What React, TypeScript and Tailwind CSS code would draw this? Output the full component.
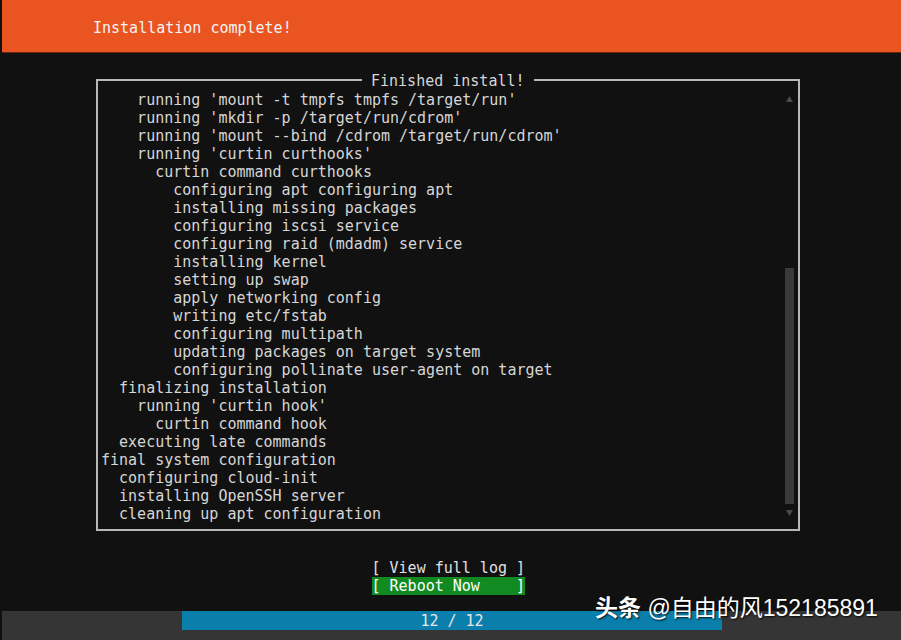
import React from "react";

const logLines = [
  "    running 'mount -t tmpfs tmpfs /target/run'",
  "    running 'mkdir -p /target/run/cdrom'",
  "    running 'mount --bind /cdrom /target/run/cdrom'",
  "    running 'curtin curthooks'",
  "      curtin command curthooks",
  "        configuring apt configuring apt",
  "        installing missing packages",
  "        configuring iscsi service",
  "        configuring raid (mdadm) service",
  "        installing kernel",
  "        setting up swap",
  "        apply networking config",
  "        writing etc/fstab",
  "        configuring multipath",
  "        updating packages on target system",
  "        configuring pollinate user-agent on target",
  "  finalizing installation",
  "    running 'curtin hook'",
  "      curtin command hook",
  "  executing late commands",
  "final system configuration",
  "  configuring cloud-init",
  "  installing OpenSSH server",
  "  cleaning up apt configuration",
];

const Arrow = ({ down }: { down?: boolean }) => (
  <svg width="9" height="8" viewBox="0 0 9 8">
    <path d={down ? "M1 1 L8 1 L4.5 7 Z" : "M1 7 L8 7 L4.5 1 Z"} fill="#4a4a4a" />
  </svg>
);

export default function App() {
  return (
    <div className="relative w-[901px] h-[640px] overflow-hidden bg-[#111111] pl-[2px] flex flex-col font-['DejaVu_Sans_Mono',monospace] text-[15px] leading-[18px] text-[#d6d6d6]">
      {/* header */}
      <div className="h-[53px] shrink-0 bg-[#e95420] border-b border-[#6b2612] pl-[91px] pt-[3px] flex items-center text-[#f4f4f4]">
        Installation complete!
      </div>

      {/* log box */}
      <div className="relative mt-[26px] ml-[94px] w-[704px] h-[452px] border-2 border-[#b8b8b8] flex">
        <span className="absolute -top-[9px] left-[264px] bg-[#111111] px-[9px] whitespace-pre">
          Finished install!
        </span>
        <div className="flex-1 pt-[10px] pl-[3px]">
          {logLines.map((line, i) => (
            <div key={i} className="h-[18px] whitespace-pre">
              {line}
            </div>
          ))}
        </div>
        <div className="w-[9px] mr-[4px] pt-[9px] flex flex-col items-center">
          <div className="h-[18px] flex items-center">
            <Arrow />
          </div>
          <div className="h-[160px]" />
          <div className="h-[236px] w-[9px] bg-[#3a3a3a]" />
          <div className="h-[18px] flex items-center">
            <Arrow down />
          </div>
        </div>
      </div>

      {/* buttons */}
      <div className="mt-[28px] ml-[94px] w-[704px] flex flex-col items-center">
        <div className="w-[153px] h-[18px] whitespace-pre text-[#e0e0e0]">{"[ View full log ]"}</div>
        <div className="w-[153px] h-[18px] whitespace-pre bg-[#128a22] text-white">{"[ Reboot Now    ]"}</div>
      </div>

      {/* progress */}
      <div className="mt-[16px] flex-1 bg-[#353535]">
        <div className="ml-[180px] w-[540px] h-[19px] bg-[#0b7fab] text-center text-[#e6e6e6] leading-[20px]">
          12 / 12
        </div>
      </div>

      {/* watermark */}
      <div className="absolute left-[595px] top-[594px] text-[23px] leading-[28px] text-white whitespace-nowrap font-['Liberation_Sans','Noto_Sans_CJK_SC',sans-serif] [text-shadow:1px_1px_2px_rgba(0,0,0,0.9)]">
        <span className="font-bold">头条</span> @自由的风152185891
      </div>
    </div>
  );
}
